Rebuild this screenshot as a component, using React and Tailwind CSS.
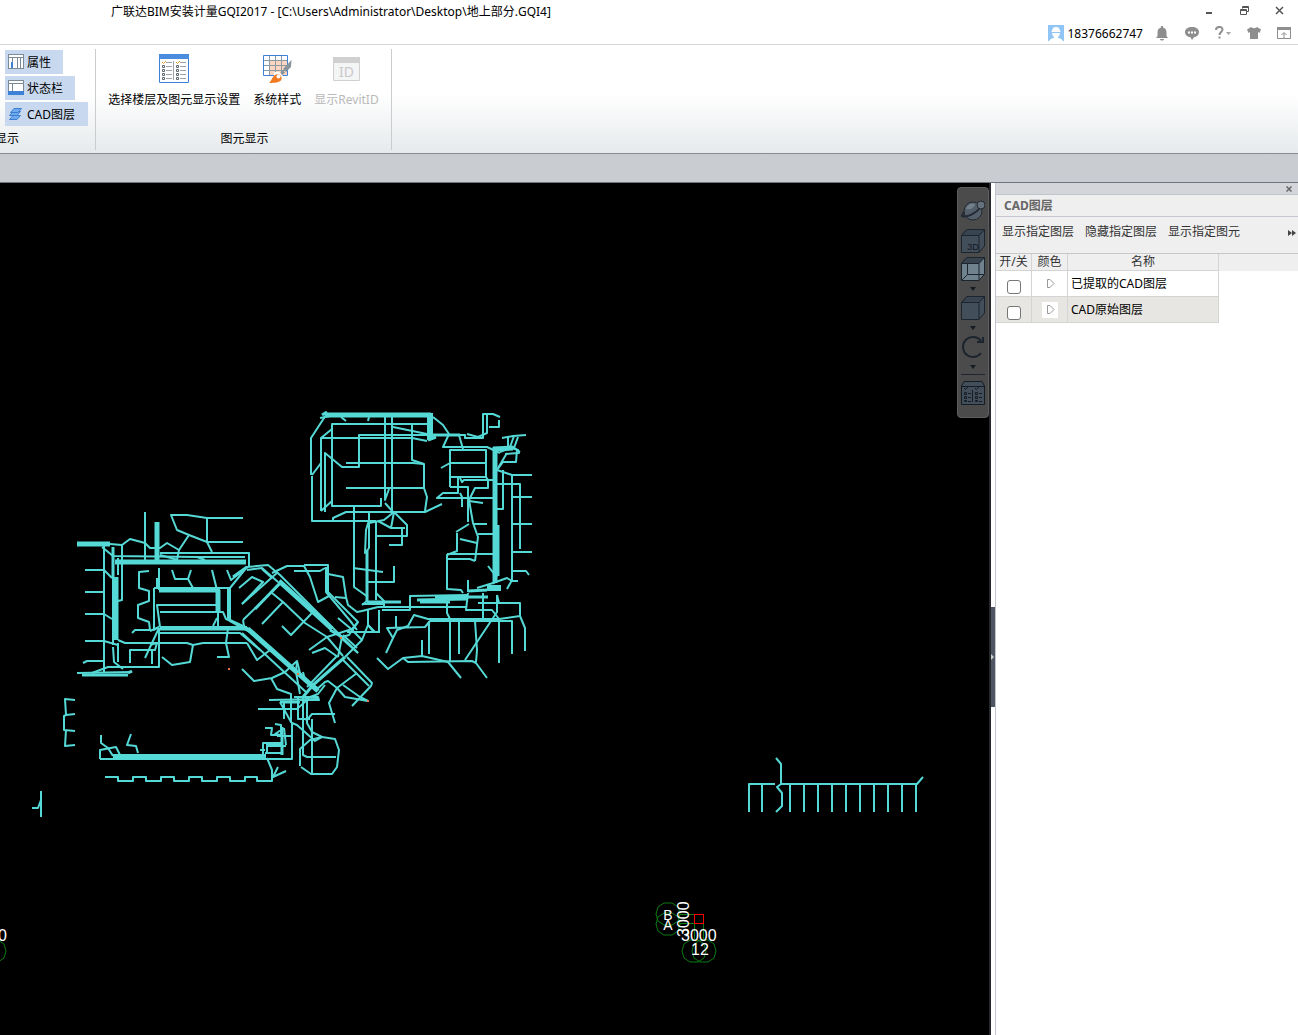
import React from "react";

const thin = [
  "320,418 330,416", "326,415 311,438 311,475", "312,476 312,521 376,521", "321,511 321,438 332,429",
  "427,424 332,424 332,506 381,506 381,498", "321,438 412,438 427,441", "430,435 359,435 359,467 342,467 325,453 325,512",
  "321,511 332,501", "312,475 321,463", "346,463 413,463 424,464 424,488 427,497 425,511", "412,424 412,460 424,464",
  "346,488 424,488", "385,417 385,500 389,489", "392,414 392,512", "393,427 427,434", "333,521 333,518 346,512 425,512 442,504",
  "341,417 346,421", "369,417 368,421", "433,417 443,425 449,434 443,447 487,447 500,453",
  "433,435 465,435 465,438 483,438 483,414 493,414 500,417", "499,420 499,427 489,427", "467,434 478,437 487,433 487,415",
  "459,435 463,449", "450,487 450,450 486,450 486,477 450,477", "450,487 468,487 468,522", "441,468 450,463 486,463",
  "486,477 488,480 488,488 475,488 469,500", "460,478 462,482 464,480 493,480", "458,478 458,493 443,493 437,498 493,498",
  "460,493 462,497 462,507", "469,501 483,503", "474,524 487,524", "456,532 469,524",
  "502,438 513,436 526,435", "508,437 508,447 518,450 519,453 505,454", "514,436 510,447", "518,437 514,448", "520,452 513,447 500,452",
  "517,450 516,462 503,462 497,470", "507,453 498,468", "497,470 512,475 532,475", "512,475 512,580", "497,484 520,484 520,549",
  "503,470 503,509 497,509", "512,497 532,497", "512,524 532,524", "512,552 532,552", "512,571 526,571 529,575",
  "469,500 473,523 478,537 475,561", "478,534 493,534", "460,539 477,543", "457,533 457,551 447,555 447,589 461,590 463,593",
  "447,554 493,554", "447,559 470,559 475,561", "354,507 354,587 368,597", "353,568 383,572",
  "369,513 369,548 365,553 366,530 369,520", "376,521 376,600", "369,523 384,520 394,512", "378,521 391,528 405,528",
  "391,528 394,512 407,525 407,536 376,536", "402,528 402,545 389,545", "385,503 393,512", "368,582 394,582 394,566",
  "362,605 367,601", "376,593 384,601 384,606", "362,604 384,604", "378,607 467,607", "382,610 410,610 410,596 467,595", "362,611 378,607",
  "477,588 493,583 507,578 512,581 518,581", "507,589 512,580", "488,566 495,575 495,583", "497,575 493,584", "468,580 468,592",
  "468,593 466,610 492,610 499,619 520,616 520,603 478,603", "483,593 483,619", "497,595 499,603", "497,595 497,612 465,660",
  "447,602 447,613 450,619 450,662", "520,616 525,628 525,651",
  "386,653 393,638 387,628 425,627 430,621 512,621 512,654", "499,619 428,619 414,615 408,626 397,630 393,638",
  "396,616 396,628", "429,621 429,654", "459,621 459,654", "475,621 477,650 476,662", "499,620 499,663",
  "377,658 388,669 403,658 422,656 448,662 461,678", "403,658 408,662 472,661 476,663 487,678", "422,640 422,656",
  "368,610 368,625 375,632", "379,610 379,632",
  "230,588 247,567 268,565 280,575 310,605 342,637", "247,570 262,568 278,582", "262,569 272,578",
  "272,573 287,566 304,566 310,577 318,602 329,596", "294,571 320,571 325,568",
  "304,565 328,565 328,592 358,622 352,629 327,637 309,650", "326,567 326,592 352,623", "335,597 346,598",
  "328,574 343,577 346,597 348,605 357,612 362,611", "239,588 252,577 263,582 242,604", "242,604 278,572",
  "243,620 281,583", "272,593 283,602 262,624", "283,602 305,623 327,637 343,656", "282,626 291,635 312,613",
  "243,620 244,626 253,632", "242,633 307,693", "247,643 257,660 270,650", "228,628 226,643 229,657 217,657",
  "242,669 254,681 272,678 285,672 297,661 300,673 316,690", "271,678 277,689 291,694 291,722", "297,661 296,672 300,694",
  "303,672 305,680 318,688", "342,637 358,653", "343,635 357,648", "342,637 338,657", "337,656 307,687", "347,657 372,683 371,686 352,706",
  "343,660 369,686", "357,673 337,688 329,703 335,723", "316,690 325,682 328,681 337,688 345,697 368,701", "343,685 360,697 368,701",
  "312,653 325,648 338,657", "338,618 350,628 362,640 345,657", "362,640 368,625 374,632", "347,632 380,632", "358,622 349,635 342,637",
  "358,653 340,637", "351,622 357,630", "294,697 318,697 319,700 300,700", "325,685 318,694 305,699",
  "110,544 122,545 122,600 118,601", "102,547 113,556 197,557 205,560", "160,553 249,553 249,567", "197,557 245,557",
  "104,545 104,672", "118,558 118,575", "113,560 113,645", "113,647 114,662 123,669", "118,643 118,662", "85,570 104,570 112,578",
  "85,592 104,592", "85,614 104,614 112,619", "85,641 104,641 118,645", "83,663 87,661 104,661", "77,673 132,672",
  "92,673 108,667 159,667 159,628", "145,512 145,562",
  "122,545 130,539 145,543 150,548 160,548 167,543 179,550 177,560", "160,555 178,560",
  "179,550 189,535 177,530 171,515 187,515 207,518 243,518", "189,535 207,542 243,542", "207,518 207,542 212,552",
  "149,571 139,572 139,588 149,591 149,601 138,605 138,618 149,622 150,630 135,630 132,633",
  "159,568 159,590", "157,578 157,588", "154,588 154,630 159,627", "154,588 230,588 230,621 250,632",
  "228,588 228,619 247,628", "217,605 157,605 160,627", "160,612 223,612 226,619 247,628", "217,618 213,626", "218,610 218,627",
  "172,570 175,579 188,579 193,588", "191,570 188,579", "212,570 217,590", "227,570 231,580 240,573",
  "160,627 247,627", "159,633 240,633 260,650", "159,628 145,658", "130,663 130,650 155,650 157,643 150,645", "152,650 152,664",
  "118,640 125,643 187,643 193,645 203,643 247,643", "162,657 172,665 190,662 193,645", "150,631 159,627",
  "75,700 65,699 66,715 75,714", "66,715 64,716 64,730 75,731", "66,730 65,746 75,745",
  "101,735 101,743 108,748 113,756", "100,759 100,750 116,747 120,755", "131,734 127,745 136,746 138,753",
  "100,759 292,759 292,723 297,725 315,741 322,737",
  "105,777 118,777 118,781 133,781 133,777 146,777 146,781 161,781 161,777 174,777 174,781 189,781 189,777 202,777 202,781 217,781 217,777 230,777 230,781 245,781 245,777 257,777 257,781 272,781 272,770 267,758",
  "278,767 273,777 286,771", "263,755 263,743 283,743", "267,753 267,746 286,746", "265,753 283,753", "260,750 265,750",
  "265,728 272,728 271,735 281,735", "275,724 281,725 281,735 275,734 281,730", "277,736 292,736", "286,745 284,728",
  "258,709 297,709 307,700", "269,700 318,699", "284,703 284,719", "280,702 291,722", "291,700 291,723",
  "298,697 298,719 310,719", "303,697 303,755 307,757 336,757", "307,697 307,723 312,732 322,737", "335,714 312,714 306,721", "312,719 312,774",
  "300,766 300,749 310,740 322,737 335,739 339,750 337,767 332,774 311,774 301,767",
  "41,791 41,817", "32,808 38,808 41,800",
  "749,812 749,784 775,784", "781,784 917,784 923,777", "762,784 762,812", "790,784 790,812", "804,784 804,812", "818,784 818,812",
  "832,784 832,812", "846,784 846,812", "860,784 860,812", "874,784 874,812", "888,784 888,812", "902,784 902,812", "916,784 916,812",
  "776,758 781,764 781,784 777,787 782,793 782,806 776,812",
];

const medium = [
  "367,550 367,601", "367,602 401,602", "417,600 467,599", "435,597 488,597", "420,602 450,602", "468,591 487,590", "433,435 460,435",
  "255,609 280,583", "345,657 313,685 303,697", "113,547 113,578", "82,675 128,675", "128,673 132,671", "280,702 300,702",
  "282,727 282,755", "160,629 250,629", "233,577 247,567", "266,744 283,744", "322,415 327,412", "498,525 498,576",
  "330,630 342,637", "428,440 436,437",
];

const thick = [
  "325,415 431,415", "495,447 495,583", "493,449 513,448", "279,581 332,629", "248,629 318,691", "77,544 110,544",
  "115,562 246,562", "116,577 116,640", "157,522 157,562", "159,590 220,590", "218,590 218,612",
];

const heavy = ["430,413 430,440", "487,588 501,588", "113,757 266,757"];

const dots = [[229, 669], [341, 638], [298, 674], [368, 701]];
const bubbles = [[668, 914], [668, 924], [694, 951], [704, 951], [-6, 951]];

function octagon(cx, cy) {
  const pts = [];
  for (let i = 0; i < 10; i++) {
    const a = (i * Math.PI) / 5;
    pts.push(`${Math.round(cx + 12 * Math.cos(a))},${Math.round(cy + 12 * Math.sin(a))}`);
  }
  return pts.join(" ");
}

function Lines({ items, width }) {
  return (
    <g strokeWidth={width}>
      {items.map((p) => (
        <polyline key={p} points={p} />
      ))}
    </g>
  );
}

function Drawing() {
  return (
    <svg className="absolute inset-0 h-full w-full" aria-label="CAD">
      <g transform="translate(0 -183)">
        <g fill="none" stroke="#55d9d6" strokeLinejoin="round">
          <Lines items={thin} width="2" />
          <Lines items={medium} width="3" />
          <Lines items={thick} width="5" />
          <Lines items={heavy} width="6" />
        </g>
        {dots.map(([x, y]) => (
          <rect key={x} x={x - 1} y={y - 1} width="2" height="2" fill="#e07840" />
        ))}
        <g fill="none" stroke="#0a7d14">
          {bubbles.map(([x, y]) => (
            <polygon key={`${x}-${y}`} points={octagon(x, y)} />
          ))}
          <path d="M680 914.500H694M680 923.500H694M694.500 923V939M703.500 923V939" />
        </g>
        <rect x="694.500" y="914.500" width="9" height="9" fill="none" stroke="#f00" />
        <g fill="#fff" fontFamily="'Liberation Sans', sans-serif" fontSize="16">
          <text x="668" y="920" textAnchor="middle" fontSize="14">B</text>
          <text x="668" y="930" textAnchor="middle" fontSize="14">A</text>
          <text x="681" y="941">3000</text>
          <text x="691" y="955">12</text>
          <text transform="translate(689 937) rotate(-90)">3000</text>
          <text x="-2" y="941">0</text>
        </g>
      </g>
    </svg>
  );
}

/* ---------- ribbon icons ---------- */

const PropsIcon = () => (
  <svg width="16" height="16" shapeRendering="crispEdges">
    <rect width="16" height="15" fill="#7b8a94" />
    <path fill="#fff" d="M1 1h14v2H1zM1 4h3v10H1zM5 4h4v10H5zM10 4h2v10h-2zM13 4h2v10h-2z" />
    <rect x="3" y="8" width="2" height="6" fill="#3e82d6" />
  </svg>
);

const StatusIcon = () => (
  <svg width="16" height="16" shapeRendering="crispEdges">
    <rect width="16" height="15" fill="#7b8a94" />
    <path fill="#fff" d="M1 1h14v2H1zM1 4h3v7H1zM5 4h10v7H5z" />
    <rect y="11" width="16" height="4" fill="#3e82d6" />
  </svg>
);

const LayersIcon = () => (
  <svg width="16" height="16" fill="#6fabee" stroke="#3b7ed0">
    <path d="M1.500 13.500L5 9.500H12.500L9 13.500z" />
    <path d="M1.500 9.500L5 5.500H12.500L9 9.500z" />
    <path d="M2.500 6.500L6 2.500H13.500L10 6.500z" />
  </svg>
);

const FloorsIcon = () => (
  <svg width="30" height="29" fill="none">
    <path fill="#fff" stroke="#3e82d6" d="M.5.5h29v28H.5z" />
    <path fill="#4a8cdd" d="M0 0h30v5H0z" />
    <path stroke="#9aa3a9" d="M14.500 7v19M7 8.500h6M7 12.500h6M7 16.500h6M7 20.500h6M7 24.500h6M21 8.500h6M21 12.500h6M21 16.500h6M21 20.500h6M21 24.500h6" />
    <path stroke="#5b666d" d="M3.500 11.500h2v2h-2zM3.500 15.500h2v2h-2zM3.500 19.500h2v2h-2zM3.500 23.500h2v2h-2zM17.500 11.500h2v2h-2zM17.500 15.500h2v2h-2zM17.500 19.500h2v2h-2zM17.500 23.500h2v2h-2z" />
    <path stroke="#e39b28" d="M3 8l1.500 1.500L7 7M17 8l1.500 1.500L21 7" />
  </svg>
);

const StyleIcon = () => (
  <svg width="30" height="30" fill="none">
    <path fill="#fff" stroke="#3e82d6" d="M1.500 1.500h24v20h-24z" />
    <path fill="#fbd5c0" d="M8 6h17v15H8z" />
    <path stroke="#8b9aa3" d="M2 6.500h23M2 11.500h23M2 16.500h23M7.500 2v19M13.500 2v19M19.500 2v19" />
    <path fill="#87949b" d="M29.500 6L29 13 24 18 21 15z" />
    <path fill="#87949b" d="M20.500 16L23 18.500 20.500 21 18.500 18.500z" />
    <path fill="#fff" d="M12 18L17 18 21 22 19 27 12 28z" />
    <path fill="#f47a22" d="M7 29C10 27 10 22 14 20.500C18 19 21 23 19 26.500C16 29 10 29 7 29z" />
    <circle cx="16.500" cy="22.500" r="2" fill="#fff" />
  </svg>
);

const IdIcon = () => (
  <svg width="27" height="24">
    <path fill="#f4f5f5" stroke="#d0d0d0" d="M.5.5h26v23H.5z" />
    <path fill="#d0d0d0" d="M0 0h27v6H0z" />
    <text x="13.500" y="20" textAnchor="middle" fontSize="14" fill="#c9c9c9" fontFamily="'Noto Sans', sans-serif">ID</text>
  </svg>
);

/* ---------- title bar icons ---------- */

const Avatar = () => (
  <svg width="16" height="16">
    <path fill="#8fc4f4" d="M0 0h16v16H0z" />
    <path fill="#fff" d="M4 6a4 4 0 0 1 8 0l1 1H3zM4 8h8c0 2-1 3-2 4v1c2 0 4 1 5 3H1c1-2 3-3 5-3v-1c-1-1-2-2-2-4z" />
  </svg>
);

const Bell = () => (
  <svg width="14" height="15" fill="#8e8e8e">
    <path d="M6 0h2v1.500c2.500.5 3.500 2.500 3.500 5V10L13 12H1l1.500-2V6.500C2.500 4 3.500 2 6 1.500zM5 13h4c0 2-4 2-4 0z" />
  </svg>
);

const Chat = () => (
  <svg width="14" height="13">
    <path fill="#8e8e8e" d="M7 0c4 0 7 2 7 5s-2.500 5-5 5.300L7 13 5.500 10.300C2.500 10 0 8 0 5s3-5 7-5z" />
    <path fill="#fff" d="M3 4.500h2v2H3zM6 4.500h2v2H6zM9 4.500h2v2H9z" />
  </svg>
);

const Help = () => (
  <svg width="17" height="14" fill="none">
    <path stroke="#8e8e8e" strokeWidth="2" d="M1 4C1 0 7.500 0 7.500 3.500C7.500 6 4.500 6 4.500 9M4.500 10.500v2" />
    <path fill="#a5a5a5" d="M11 6h5l-2.500 3z" />
  </svg>
);

const Shirt = () => (
  <svg width="14" height="12" fill="#8e8e8e">
    <path d="M4 0c1 1.500 5 1.500 6 0l4 2.500L12.500 6 11 5v7H3V5L1.500 6 0 2.500z" />
  </svg>
);

const Collapse = () => (
  <svg width="14" height="12" fill="none">
    <path stroke="#8e8e8e" d="M.5.5h13v11H.5zM7 11V6M4.500 8L7 5.500L9.500 8" />
    <path fill="#8e8e8e" d="M0 0h14v3H0z" />
  </svg>
);

/* ---------- view toolbar icons ---------- */

const Orbit = () => (
  <svg width="24" height="24">
    <circle cx="12" cy="12" r="9" fill="#53606c" stroke="#222a33" />
    <path fill="#738089" d="M5 10a7 7 0 0 1 9-5c-1 4-4 6-9 5z" />
    <path fill="none" stroke="#222a33" strokeWidth="2" d="M3 13L1 17c5 2 14-3 18-8" />
    <circle cx="20" cy="6" r="4" fill="#65717d" stroke="#222a33" />
  </svg>
);

function Cube({ glass, label }) {
  return (
    <svg width="24" height="24" stroke="#1c242d" strokeLinejoin="round">
      <path fill={glass ? "#71828f" : "#434e5b"} d="M.5 6.500L6 .5H23.500V17L18 23.500H.5z" />
      <path fill="#384450" d="M.5 6.500L6 .5H23.500L18 6.500z" />
      <path fill="none" d="M18 6.500V23.500" />
      {glass && <path fill="none" d="M6.500 7V17.500H18M6.500 17.500L1 23M18 17.500H23" />}
      {label && (
        <text x="12" y="21" textAnchor="middle" fontSize="9" stroke="none" fill="#10161c" fontFamily="'Liberation Sans', sans-serif">3D</text>
      )}
    </svg>
  );
}

const Rotate = () => (
  <svg width="24" height="24" fill="none" stroke="#1c242d" strokeWidth="2">
    <path d="M20 18A10 10 0 1 1 20 6M22 2V7H16" />
  </svg>
);

const ListIcon = () => (
  <svg width="24" height="24" fill="none" stroke="#151c24">
    <path fill="#434e5b" d="M.5 5L3 .5H21L23.500 5V23.500H.5zM.5 5.500h23" />
    <path d="M11.500 9v12M3 7l1.500 1.500L7 6M14 7l1.500 1.500L18 6M3.500 11.500h2v2h-2zM3.500 15.500h2v2h-2zM3.500 19.500h2v1h-2zM14.500 11.500h2v2h-2zM14.500 15.500h2v2h-2zM14.500 19.500h2v1h-2zM7 12.500h3M7 16.500h3M7 20.500h3M18 12.500h3M18 16.500h3M18 20.500h3" />
  </svg>
);

const Caret = () => (
  <button type="button" aria-label="更多" className="flex h-[15px] w-6 items-center justify-center">
    <svg width="6" height="4"><path fill="#151c24" d="M0 0h6L3 4z" /></svg>
  </button>
);

function ViewToolbar() {
  return (
    <div className="absolute right-0 top-1 flex w-8 flex-col items-center rounded-sm border border-[#5e5e5e] bg-[#4b4b4b] pb-3 pt-[11px]">
      <button type="button" aria-label="动态观察"><Orbit /></button>
      <button type="button" aria-label="三维" className="mt-1.5"><Cube label /></button>
      <button type="button" aria-label="线框" className="mt-1"><Cube glass /></button>
      <Caret />
      <button type="button" aria-label="视图"><Cube /></button>
      <Caret />
      <button type="button" aria-label="旋转"><Rotate /></button>
      <Caret />
      <div className="mb-1.5 h-px w-6 bg-[#20262c]" />
      <button type="button" aria-label="显示设置"><ListIcon /></button>
    </div>
  );
}

function Toggle({ icon, children, className }) {
  return (
    <button type="button" aria-pressed="true" className={`flex h-6 items-center gap-[3px] bg-[#c8d9ef] pl-[3px] ${className}`}>
      {icon}
      <span className="pt-0.5">{children}</span>
    </button>
  );
}

function Ribbon() {
  return (
    <div className="flex h-[109px] border-b border-[#868c92] bg-linear-to-b from-white from-45% to-[#e6eaec] pb-[3px] pt-1">
      <section className="flex w-24 flex-col border-r border-[#c9cdd0] pl-[5px] pt-px">
        <div className="flex flex-col items-start gap-0.5">
          <Toggle icon={<PropsIcon />} className="w-[58px]">属性</Toggle>
          <Toggle icon={<StatusIcon />} className="w-[70px]">状态栏</Toggle>
          <Toggle icon={<LayersIcon />} className="w-[83px]">CAD图层</Toggle>
        </div>
        <div className="-ml-[10px] mt-[5px] leading-4">显示</div>
      </section>
      <section className="flex w-[296px] flex-col items-center border-r border-[#c9cdd0] pt-[5px]">
        <div className="flex h-[54px] gap-[13px]">
          <button type="button" className="flex flex-col items-center justify-between">
            <FloorsIcon />
            <span className="leading-4">选择楼层及图元显示设置</span>
          </button>
          <button type="button" className="flex flex-col items-center justify-between">
            <StyleIcon />
            <span className="leading-4">系统样式</span>
          </button>
          <button type="button" disabled className="flex flex-col items-center justify-between pt-[3px] text-[#b9b9b9]">
            <IdIcon />
            <span className="leading-4">显示RevitID</span>
          </button>
        </div>
        <div className="mt-[23px] pl-0.5 leading-4">图元显示</div>
      </section>
    </div>
  );
}

function Header() {
  return (
    <header className="h-[45px] border-b border-[#d4d6d8] bg-white">
      <div className="flex h-6 items-center justify-between pl-[111px] pr-[14px]">
        <h1>广联达BIM安装计量GQI2017 - [C:\Users\Administrator\Desktop\地上部分.GQI4]</h1>
        <div className="flex items-center gap-[26px] pb-1">
          <button type="button" aria-label="最小化">
            <svg width="8" height="9"><path fill="#555" d="M0 6h6v2H0z" /></svg>
          </button>
          <button type="button" aria-label="还原">
            <svg width="9" height="9" fill="none" stroke="#555"><path d="M2.500 2.500V.5h6v5h-2M.5 3.500h6v5h-6zM.5 4.500h6M2.500 1.500h6" /></svg>
          </button>
          <button type="button" aria-label="关闭">
            <svg width="9" height="9" stroke="#555" strokeWidth="1.500"><path d="M1 1l7 7M8 1l-7 7" /></svg>
          </button>
        </div>
      </div>
      <div className="flex h-[18px] items-center justify-end gap-4 pr-[7px]">
        <button type="button" className="-mr-1 flex items-center gap-[3px]"><Avatar /><span className="pt-px">18376662747</span></button>
        <button type="button" aria-label="通知"><Bell /></button>
        <button type="button" aria-label="消息"><Chat /></button>
        <button type="button" aria-label="帮助" className="-mr-px"><Help /></button>
        <button type="button" aria-label="皮肤"><Shirt /></button>
        <button type="button" aria-label="收起"><Collapse /></button>
      </div>
    </header>
  );
}

const Play = () => (
  <svg width="16" height="16" className="mx-auto block">
    <path fill="#fff" d="M0 0h16v16H0z" />
    <path fill="none" stroke="#999" d="M5.500 3.500H8L12 7.500L8 11.500H5.500z" />
  </svg>
);

const rows = ["已提取的CAD图层", "CAD原始图层"];

function LayerPanel() {
  return (
    <aside className="flex w-[303px] shrink-0 flex-col border-l border-[#c3c6cc] bg-white">
      <div className="flex h-3 items-center justify-end border-b border-[#c0c4cb] bg-[#d3d5da] pr-1.5">
        <button type="button" aria-label="关闭面板">
          <svg width="6" height="6" stroke="#666" strokeWidth="1.500"><path d="M.5.5l5 5M5.500.5l-5 5" /></svg>
        </button>
      </div>
      <h2 className="h-[22px] border-b border-[#c5c8cf] bg-[#efefef] pl-2 font-bold leading-[21px] text-[#666]">CAD图层</h2>
      <div className="flex h-9 items-start gap-[11px] bg-[#efefef] pl-1.5 pt-[7px] text-[#333]">
        <button type="button" className="leading-4">显示指定图层</button>
        <button type="button" className="leading-4">隐藏指定图层</button>
        <button type="button" className="leading-4">显示指定图元</button>
        <button type="button" aria-label="更多" className="ml-auto self-start pr-0.5 pt-1.5">
          <svg width="8" height="6" fill="#444"><path d="M0 0l4 3-4 3zM4 0l4 3-4 3z" /></svg>
        </button>
      </div>
      <table className="w-full table-fixed border-separate border-spacing-0 border-t border-[#c8c8c8]">
        <colgroup>
          <col className="w-9" />
          <col className="w-9" />
          <col className="w-[151px]" />
          <col />
        </colgroup>
        <thead>
          <tr className="h-[17px] bg-[#efefef] leading-4 text-[#333]">
            <th className="border-b border-r border-[#d4d4d4] p-0 font-normal">开/关</th>
            <th className="border-b border-r border-[#d4d4d4] p-0 font-normal">颜色</th>
            <th className="border-b border-r border-[#d4d4d4] p-0 font-normal">名称</th>
            <td />
          </tr>
        </thead>
        <tbody>
          {rows.map((name, i) => (
            <tr key={name} className="h-[26px]">
              <td className={`border-b border-r border-[#d4d4d4] p-0 pt-1.5 ${i ? "bg-[#e7e6e2]" : ""}`}>
                <input
                  type="checkbox"
                  aria-label={name}
                  className="mx-auto block size-3.5 appearance-none rounded-[3px] border border-[#767676] bg-white"
                />
              </td>
              <td className={`border-b border-r border-[#d4d4d4] p-0 ${i ? "bg-[#e7e6e2]" : ""}`}><Play /></td>
              <td className={`border-b border-r border-[#d4d4d4] p-0 pl-[3px] ${i ? "bg-[#e7e6e2]" : ""}`}>{name}</td>
              <td />
            </tr>
          ))}
        </tbody>
      </table>
    </aside>
  );
}

export default function App() {
  return (
    <div className="flex min-h-screen flex-col bg-white font-['Noto_Sans','Noto_Sans_CJK_SC',sans-serif] text-[12px] leading-4 text-black">
      <Header />
      <Ribbon />
      <div className="h-[29px] border-b border-[#70767d] bg-[#c9cdd2]" />
      <div className="flex flex-1">
        <main className="relative flex-1 overflow-hidden border-r-2 border-[#26282b] bg-black">
          <Drawing />
          <ViewToolbar />
        </main>
        <div className="flex w-1 shrink-0 items-center">
          <button type="button" aria-label="折叠面板" className="mt-24 flex h-[100px] w-1 items-center bg-[#4e5663]">
            <svg width="4" height="6" fill="#ccc"><path d="M0 0l3 3-3 3z" /></svg>
          </button>
        </div>
        <LayerPanel />
      </div>
    </div>
  );
}
